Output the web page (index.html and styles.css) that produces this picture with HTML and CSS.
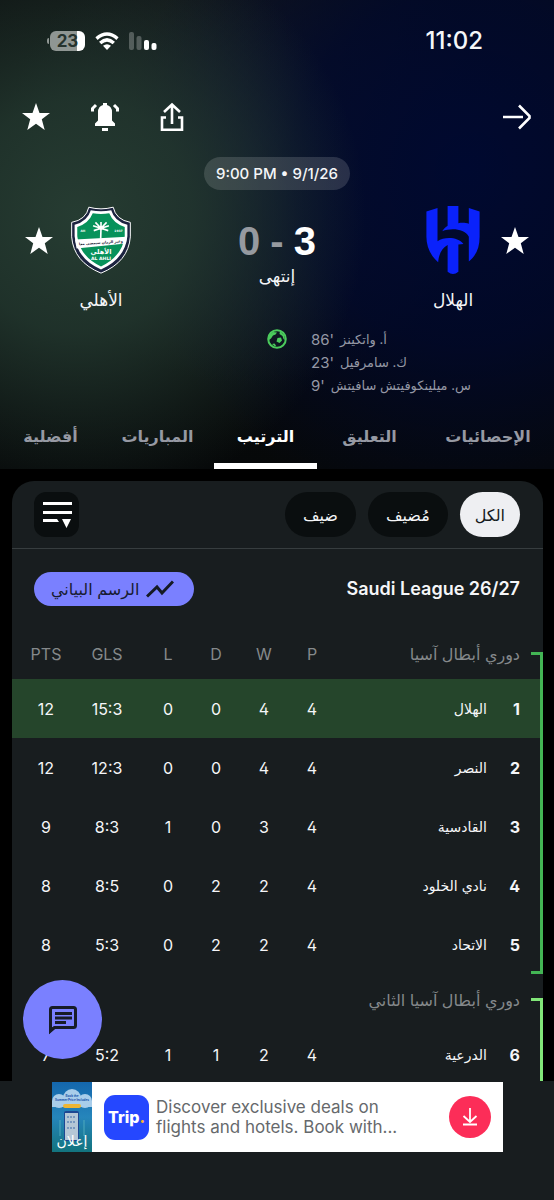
FILE: index.html
```html
<!DOCTYPE html>
<html lang="ar" dir="rtl">
<head>
<meta charset="utf-8">
<meta name="viewport" content="width=device-width, initial-scale=1">
<title>الهلال - الأهلي</title>
<link rel="stylesheet" href="styles.css">
</head>
<body>
<div class="app">
  <header class="match">
    <div class="status">
      <time class="clock">11:02</time>
      <div class="system" dir="ltr">
        <div class="battery"><span class="battery-body">23</span></div>
        <svg class="wifi" viewBox="0 0 24 18" width="24" height="18"><g fill="none" stroke="#fff" stroke-width="3.400"><path d="M1.500 6.600Q12-2.400 22.500 6.600"/><path d="M5.200 11Q12 4.800 18.800 11"/></g><path d="M12 18l-4-4.200q4-3.200 8 0z" fill="#fff"/></svg>
        <svg class="signal" viewBox="0 0 28 18" width="28" height="18"><g fill="#fff"><rect x="0" y="0" width="5" height="18" rx="2" opacity=".25"/><rect x="7.500" y="4" width="5" height="14" rx="2" opacity=".25"/><rect x="15" y="8" width="5" height="10" rx="2"/><rect x="22.500" y="11" width="5" height="7" rx="2"/></g></svg>
      </div>
    </div>

    <div class="toolbar">
      <button class="icon-btn" aria-label="رجوع"><svg viewBox="0 0 30 26" width="30" height="26" fill="none" stroke="#fff" stroke-width="2.600"><path d="M1 13h20M17 1.500l10.500 10.500v2L17 24.500"/></svg></button>
      <div class="actions">
        <button class="icon-btn" aria-label="مشاركة"><svg viewBox="0 0 24 30" width="24" height="30" fill="none" stroke="#fff" stroke-width="2.600"><path d="M6 15.500H2v12.200h20V15.500h-4M12 22V3M4 10l8-7.500L20 10"/></svg></button>
        <button class="icon-btn" aria-label="تنبيهات"><svg viewBox="0 0 30 30" width="30" height="30"><g fill="#fff"><path d="M13 1h4v2q5 1.500 5 7v8.500l3 3V24H5v-2.500l3-3V10q0-5.500 5-7zM12 26h6v3h-6z"/></g><path d="M2.500 9.500V6.500L6 3M27.500 9.500V6.500L24 3" fill="none" stroke="#fff" stroke-width="3"/></svg></button>
        <button class="icon-btn" aria-label="مفضلة"><svg viewBox="0 0 28 28" width="28" height="28"><path class="star" d="M14 0l3.500 10H28l-8.200 6.300L22.700 27 14 20.800 5.300 27l2.900-10.700L0 10h10.500z"/></svg></button>
      </div>
    </div>

    <div class="kickoff" dir="ltr">9:00 PM • 9/1/26</div>

    <div class="versus">
      <button class="icon-btn fav" aria-label="تفضيل الهلال"><svg viewBox="0 0 28 28" width="28" height="28"><path class="star" d="M14 0l3.500 10H28l-8.200 6.300L22.700 27 14 20.800 5.300 27l2.900-10.700L0 10h10.500z"/></svg></button>
      <div class="team">
        <svg class="crest" viewBox="447 171 158 202" fill="#0a22fb"><path d="M447 187L480 177V276C500 262 540 262 557 284L542 285V366Q526 380 510 366V287C492 296 483 318 482 338C458 318 447 290 447 262Z"/><path d="M605 187L573 177V224C565 221 553 220 542 222V171H510V230C503 234 498 240 494 246C520 236 560 238 573 262V336C595 318 605 295 605 262Z"/></svg>
        <span>الهلال</span>
      </div>
      <div class="result">
        <div class="score"><b>3</b><i>-</i><i>0</i></div>
        <div>إنتهى</div>
      </div>
      <div class="team">
        <svg class="crest" viewBox="214 169 182 205"><path d="M268 172Q305 182 342 172Q350 210 394 218V262Q388 338 305 372Q222 338 216 262V218Q260 210 268 172Z" fill="#1c2340" stroke="#fff" stroke-width="3"/><path d="M274 181Q305 188 336 181Q346 215 385 225V260Q378 328 305 361Q232 328 225 260V225Q264 215 274 181Z" fill="#fff"/><path d="M280 190Q305 195 330 190Q342 220 377 232V260Q370 320 305 352Q240 320 233 260V232Q268 220 280 190Z" fill="#07925a"/><g fill="none" stroke="#fff" stroke-width="5"><path d="M304 268L305 236L281 228M305 236L329 228M305 236L288 218M305 236L322 218M305 236V217M305 236L283 243M305 236L327 243"/></g><path d="M226 270L384 262L380 282L231 297Z" fill="#fff"/><g text-anchor="middle" class="crest-text"><text x="305" y="283" font-size="11" fill="#152033" transform="rotate(-4 305 280)">وعبر الزمان سنمضي معا</text><text x="305" y="314" font-size="20" fill="#fff">الأهلي</text><text x="305" y="332" font-size="14" fill="#fff">AL AHLI</text><text x="250" y="247" font-size="9" fill="#fff">AH</text><text x="358" y="247" font-size="9" fill="#fff">1937</text></g></svg>
        <span>الأهلي</span>
      </div>
      <button class="icon-btn fav" aria-label="تفضيل الأهلي"><svg viewBox="0 0 28 28" width="28" height="28"><path class="star" d="M14 0l3.500 10H28l-8.200 6.300L22.700 27 14 20.800 5.300 27l2.900-10.700L0 10h10.500z"/></svg></button>
    </div>

    <div class="scorers">
      <ul>
        <li><span>أ. واتكينز</span><span class="minute" dir="ltr">86'</span></li>
        <li><span>ك. سامرفيل</span><span class="minute" dir="ltr">23'</span></li>
        <li><span>س. ميلينكوفيتش سافيتش</span><span class="minute" dir="ltr">9'</span></li>
      </ul>
      <svg viewBox="0 0 20 20" width="20" height="20"><circle cx="10" cy="10" r="8.800" fill="none" stroke="#4bcb5c" stroke-width="2"/><path d="M2 6l4-3 4 .5L8.500 5.500 6 6.500 4 9.500 2 11zM10.500 9l3.500-.5 1 3-2.500 2.500L9.500 12.500zM13 2l4 4 1 5-1.500-1-1-3-3-2zM5 15l2.500-.5 1.500 2-1 1z" fill="#4bcb5c"/></svg>
    </div>

    <nav class="tabs">
      <a href="#stats">الإحصائيات</a>
      <a href="#commentary">التعليق</a>
      <a href="#standings" class="active" aria-current="page">الترتيب</a>
      <a href="#matches">المباريات</a>
      <a href="#odds">أفضلية</a>
    </nav>
  </header>

  <main class="content" id="standings">
    <section class="card">
      <div class="filters">
        <button class="chip selected">الكل</button>
        <button class="chip">مُضيف</button>
        <button class="chip">ضيف</button>
        <button class="sort" aria-label="ترتيب"><svg viewBox="0 0 30 28" width="30" height="28" fill="#fff"><path d="M1 1h29v3H1zM1 10h29v3H1zM1 18h14l2 3H1zM20 18h9l-4.500 9z"/></svg></button>
      </div>
      <div class="league">
        <h1 dir="ltr">Saudi League 26/27</h1>
        <button class="graph"><svg viewBox="0 0 28 18" width="28" height="18" fill="none" stroke="#151a24" stroke-width="3"><path d="M1 16.500L11 7l5 6L27 1.500"/></svg>الرسم البياني</button>
      </div>
      <table>
        <colgroup><col class="c-rank"><col><col class="c-num"><col class="c-num"><col class="c-num"><col class="c-num"><col class="c-goals"><col class="c-points"></colgroup>
        <tbody class="zone">
          <tr class="heading"><th colspan="2" class="zone-name">دوري أبطال آسيا</th><th>P</th><th>W</th><th>D</th><th>L</th><th>GLS</th><th class="pts">PTS</th></tr>
          <tr class="current"><td class="rank">1</td><th scope="row">الهلال</th><td>4</td><td>4</td><td>0</td><td>0</td><td dir="ltr">15:3</td><td class="pts">12</td></tr>
          <tr><td class="rank">2</td><th scope="row">النصر</th><td>4</td><td>4</td><td>0</td><td>0</td><td dir="ltr">12:3</td><td class="pts">12</td></tr>
          <tr><td class="rank">3</td><th scope="row">القادسية</th><td>4</td><td>3</td><td>0</td><td>1</td><td dir="ltr">8:3</td><td class="pts">9</td></tr>
          <tr><td class="rank">4</td><th scope="row">نادي الخلود</th><td>4</td><td>2</td><td>2</td><td>0</td><td dir="ltr">8:5</td><td class="pts">8</td></tr>
          <tr><td class="rank">5</td><th scope="row">الاتحاد</th><td>4</td><td>2</td><td>2</td><td>0</td><td dir="ltr">5:3</td><td class="pts">8</td></tr>
        </tbody>
        <tbody class="zone second">
          <tr class="heading"><th colspan="8" class="zone-name">دوري أبطال آسيا الثاني</th></tr>
          <tr><td class="rank">6</td><th scope="row">الدرعية</th><td>4</td><td>2</td><td>1</td><td>1</td><td dir="ltr">5:2</td><td class="pts">7</td></tr>
        </tbody>
      </table>
    </section>
    <button class="chat" aria-label="الدردشة"><svg viewBox="0 0 30 30" width="30" height="30"><path d="M2.500 26V4.500q0-2 2-2h21q2 0 2 2v16q0 2-2 2h-19z" fill="none" stroke="#171c28" stroke-width="3"/><path d="M1 21v8l6-6zM7 7h17v3H7zM7 11.500h17v3H7zM7 16h11v3H7z" fill="#171c28"/></svg></button>
  </main>

  <footer class="ad-area">
    <a class="ad" href="#trip" dir="ltr">
      <span class="thumb">
        <svg viewBox="0 0 40 70" width="40" height="70"><defs><linearGradient id="sky" x2="0" y2="1"><stop stop-color="#1467ad"/><stop offset=".5" stop-color="#2685bb"/><stop offset="1" stop-color="#13747e"/></linearGradient></defs><path fill="url(#sky)" d="M0 0h40v70H0z"/><g fill="#a9cdea"><circle cx="7" cy="19" r="7"/><circle cx="20" cy="16" r="9"/><circle cx="33" cy="19" r="7"/><path d="M0 19h40v6H0z"/></g><g class="thumb-text" text-anchor="middle" fill="#174da8"><text x="20" y="15">Book the</text><text x="20" y="19">Summer Price Includes</text></g><rect x="11" y="22" width="18" height="4" rx="2" fill="#eeb534"/><rect x="12" y="29" width="15" height="30" rx="2" fill="#1d4792"/><rect x="13" y="31" width="13" height="27" fill="#b5c7d6"/><path d="M15 35h9M15 40h9M15 46h9" stroke="#7898bf" stroke-width="2" stroke-dasharray="2 1"/><path d="M8 38v16M32 38v16" stroke="#4faabd"/></svg>
        <span class="ad-label" dir="rtl">إعلان</span>
      </span>
      <span class="brand">Trip<em>.</em></span>
      <span class="ad-copy">Discover exclusive deals on flights and hotels. Book with...</span>
      <svg class="download" viewBox="0 0 42 42" width="42" height="42"><circle cx="21" cy="21" r="21" fill="#fc2d58"/><path d="M21 12v14M14.500 20l6.500 6 6.500-6M14 28.500h14" fill="none" stroke="#fff" stroke-width="1.800"/></svg>
    </a>
  </footer>
</div>
</body>
</html>
```
FILE: styles.css
```css
*, *::before, *::after { box-sizing: border-box; }

body {
  margin: 0;
  background: #000;
  color: #f5f6f8;
  font-family: Inter, "DejaVu Sans", sans-serif;
  font-size: 16px;
  line-height: 22px;
}

button {
  border: 0;
  padding: 0;
  background: none;
  color: inherit;
  font: inherit;
  cursor: pointer;
}

a { color: inherit; text-decoration: none; }
svg { display: block; flex: none; }
.star { fill: #fff; }

.app {
  display: flex;
  flex-direction: column;
  height: 100vh;
}

/* Match header */
.match {
  flex: none;
  padding-top: 28px;
  background:
    radial-gradient(ellipse 52% 62% at 14% 46%, #263c32 0%, rgba(35, 56, 47, .85) 40%, rgba(28, 45, 38, 0) 100%),
    radial-gradient(ellipse 62% 75% at 84% 36%, #000930 0%, rgba(0, 8, 44, .8) 50%, rgba(0, 5, 30, 0) 100%),
    radial-gradient(ellipse 45% 50% at 46% 32%, #1b222c 0%, rgba(16, 20, 28, 0) 100%),
    linear-gradient(#0c0f10, #060809);
}

.status {
  display: flex;
  justify-content: space-between;
  align-items: center;
  height: 26px;
  padding: 0 71px 0 47px;
}

.clock { font-size: 24px; font-weight: 500; }

.system { display: flex; align-items: center; gap: 10px; }
.battery { display: flex; align-items: center; gap: 1px; }
.battery::before {
  content: "";
  width: 2px;
  height: 6px;
  border-radius: 2px 0 0 2px;
  background: #8f9693;
}
.battery-body {
  width: 35px;
  border-radius: 6px;
  background: linear-gradient(to left, #fff 8px, #8f9693 8px);
  color: #26332e;
  font-size: 17px;
  font-weight: 700;
  line-height: 20px;
  text-align: center;
}

.toolbar {
  display: flex;
  justify-content: space-between;
  align-items: center;
  height: 30px;
  margin-top: 48px;
  padding: 0 22px;
}
.actions { display: flex; align-items: center; gap: 40px; }

.kickoff {
  width: fit-content;
  margin: 25px auto 0;
  padding: 0 12px;
  border-radius: 17px;
  background: rgba(255, 255, 255, .14);
  font-size: 15px;
  font-weight: 500;
  line-height: 33px;
}

.versus {
  display: grid;
  grid-template-columns: 28px 90px 1fr 90px 28px;
  column-gap: 3px;
  margin-top: 16px;
  padding: 0 25px;
  font-size: 17px;
}
.fav { align-self: start; margin-top: 21px; }
.team {
  display: flex;
  flex-direction: column;
  align-items: center;
  gap: 15px;
}
.crest { width: 60px; height: 68px; }
.crest-text { font-family: "DejaVu Sans", sans-serif; font-weight: 700; }
.result { text-align: center; }
.score {
  display: flex;
  justify-content: center;
  gap: 10px;
  margin: 15px 0 4px;
  font-family: "Liberation Sans", sans-serif;
  font-size: 40px;
  font-weight: 700;
  line-height: 40px;
}
.score b { color: #fff; }
.score i { color: #969aa0; font-style: normal; }

.scorers {
  display: grid;
  grid-template-columns: 1fr 20px 1fr;
  column-gap: 24px;
  margin-top: 17px;
  color: #9598a5;
}
.scorers ul { margin: 0; padding: 0; list-style: none; font-size: 13px; }
.scorers li {
  display: flex;
  justify-content: flex-end;
  gap: 6px;
  line-height: 23px;
  white-space: nowrap;
}
.scorers .minute { font-size: 15px; }
.scorers svg { margin-top: 1px; }

.tabs {
  display: grid;
  grid-template-columns: 132fr 105fr 103fr 113fr 101fr;
  height: 66px;
  margin-top: 6px;
  color: #9699a3;
  font-weight: 600;
  text-align: center;
  white-space: nowrap;
}
.tabs a {
  padding-top: 22px;
  border-bottom: 6px solid transparent;
}
.tabs .active { border-color: #fff; color: #fff; }

/* Standings */
.content {
  position: relative;
  flex: 1;
  min-height: 0;
  overflow: hidden;
  padding: 12px 11px 0 12px;
}
.card { border-radius: 22px 22px 0 0; background: #181d1f; }

.filters {
  display: flex;
  gap: 12px;
  padding: 11px 23px 11px 22px;
  border-bottom: 1px solid #373d3f;
}
.chip {
  height: 45px;
  padding: 0 18px;
  border-radius: 23px;
  background: #0a0e0f;
}
.chip.selected { padding: 0 15px; background: #eeeff2; color: #15191b; }
.sort {
  display: grid;
  place-items: center;
  width: 45px;
  height: 45px;
  margin-right: auto;
  border-radius: 12px;
  background: #0a0e0f;
}

.league {
  display: flex;
  justify-content: space-between;
  align-items: center;
  padding: 23px 23px 22px 22px;
}
.league h1 { margin: 0; font-size: 18px; font-weight: 600; }
.graph {
  display: flex;
  align-items: center;
  gap: 7px;
  height: 34px;
  padding: 0 20px 0 17px;
  border-radius: 17px;
  background: #7a80ff;
  color: #171b30;
}

table {
  width: 100%;
  table-layout: fixed;
  border-collapse: collapse;
  font-feature-settings: "cv02";
}
.c-rank { width: 56px; }
.c-num { width: 48px; }
.c-goals { width: 74px; }
.c-points { width: 58px; }

tr { height: 59px; }
th, td { padding: 0; font-weight: 400; text-align: center; }
th[scope="row"] { font-size: 14px; text-align: right; }
.heading { height: 51px; }
.heading th { color: #85898b; }
.heading .zone-name { padding-right: 23px; text-align: right; }
.pts { padding-left: 10px; }
.rank { padding-right: 23px; font-weight: 700; text-align: right; }
.current { background: #25452b; }

.zone { position: relative; }
.zone::after {
  content: "";
  position: absolute;
  top: 24px;
  right: 0;
  bottom: 0;
  width: 12px;
  border: 3px solid #43b554;
  border-left: 0;
}
.second::after { border-color: #81e678; }

.chat {
  position: absolute;
  left: 23px;
  bottom: 22px;
  display: grid;
  place-items: center;
  width: 79px;
  height: 79px;
  border-radius: 50%;
  background: #7a80ff;
}

/* Advertisement */
.ad-area { flex: none; padding: 1px 51px 48px 52px; background: #181d1f; }
.ad {
  display: flex;
  align-items: center;
  height: 70px;
  padding-right: 12px;
  background: #fff;
  color: #66696c;
}
.thumb { position: relative; }
.thumb-text { font-size: 3px; font-weight: 700; }
.ad-label {
  position: absolute;
  right: 0;
  bottom: 0;
  left: 0;
  color: #fff;
  font-size: 14px;
  text-align: center;
}
.brand {
  flex: none;
  width: 45px;
  margin: 0 7px 0 12px;
  border-radius: 11px;
  background: #2547ff;
  color: #fff;
  font-size: 16px;
  font-weight: 800;
  line-height: 45px;
  text-align: center;
}
.brand em { color: #ffb52b; font-style: normal; }
.ad-copy { flex: 1; max-width: 250px; font-size: 17px; line-height: 20px; }
.download { margin-left: auto; }
```
